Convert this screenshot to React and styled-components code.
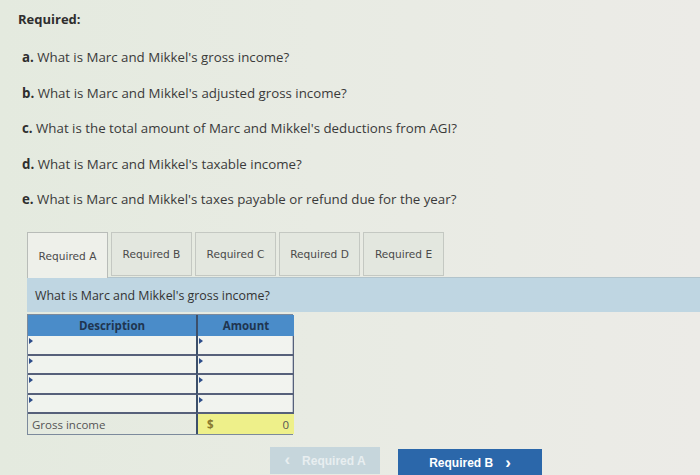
import React from "react";
import styled, { createGlobalStyle } from "styled-components";

const Global = createGlobalStyle`
  html, body { margin: 0; padding: 0; }
  body {
    width: 700px; height: 475px; overflow: hidden;
    background: linear-gradient(90deg, #e4eadf 0%, #e8ebe3 45%, #ecebe7 100%);
    font-family: "Open Sans", "Liberation Sans", sans-serif;
    color: #333;
  }
`;

const Page = styled.div`
  padding: 10px 0 0 0;
  display: flex;
  flex-direction: column;
`;

const Title = styled.div`
  font-weight: 700;
  font-size: 13px;
  padding-left: 18px;
  height: 18px;
  line-height: 18px;
  color: #2e2e2e;
`;

const Questions = styled.ol`
  list-style: none;
  margin: 21px 0 0 0;
  padding: 0 0 0 22px;
  display: flex;
  flex-direction: column;
  gap: 18.5px;
`;

const Q = styled.li`
  font-size: 13.3px;
  line-height: 17px;
  color: #3a3a3a;
  b { font-weight: 700; color: #2e2e2e; }
`;

const TabsArea = styled.div`
  margin: 24px 0 0 27px;
  display: flex;
  flex-direction: column;
`;

const TabRow = styled.div`
  display: flex;
  gap: 3px;
  height: 45px;
  position: relative;
  z-index: 1;
`;

const Tab = styled.div`
  width: 81px;
  box-sizing: border-box;
  border: 1px solid ${p => (p.$active ? "#b8bcb8" : "#c4c8c2")};
  border-bottom: ${p => (p.$active ? "none" : "1px solid #c4c8c2")};
  background: ${p => (p.$active ? "#eef0ea" : "#e3e7df")};
  height: ${p => (p.$active ? "46px" : "44px")};
  display: flex;
  align-items: center;
  justify-content: center;
  font-family: "DejaVu Sans", Verdana, sans-serif;
  font-size: 10.6px;
  color: #4a4a4a;
  white-space: nowrap;
`;

const Prompt = styled.div`
  height: 34px;
  background: #bfd6e2;
  border-top: 1px solid #b2c4cc;
  display: flex;
  align-items: center;
  padding-left: 8px;
  font-size: 12.4px;
  color: #333;
`;

const Table = styled.div`
  margin-top: 2px;
  width: 266px;
  display: grid;
  grid-template-columns: 168px 98px;
  border: 1px solid #7c8a9c;
  box-sizing: border-box;
`;

const Head = styled.div`
  background: #4a8cc9;
  height: 21px;
  display: flex;
  align-items: center;
  justify-content: center;
  font-weight: 700;
  font-size: 11.5px;
  color: #1f3550;
  border-left: ${p => (p.$right ? "2px solid #3c4f6a" : "none")};
`;

const Cell = styled.div`
  position: relative;
  height: 19.5px;
  box-sizing: border-box;
  border-bottom: 2px solid #56607a;
  border-left: ${p => (p.$right ? "2px solid #3c4f6a" : "none")};
  border-right: ${p => (p.$right ? "1px solid #56607a" : "none")};
  background: rgba(250, 250, 250, 0.55);
  &::before {
    content: "";
    position: absolute;
    left: 1px; top: 2px;
    border-left: 4px solid #2d4d8a;
    border-top: 3px solid transparent;
    border-bottom: 3px solid transparent;
  }
`;

const TotalLabel = styled.div`
  height: 20px;
  display: flex;
  align-items: center;
  padding-left: 4px;
  font-size: 11.5px;
  color: #555;
`;

const TotalAmount = styled.div`
  height: 20px;
  border-left: 2px solid #3c4f6a;
  background: #eef08a;
  display: flex;
  align-items: center;
  justify-content: space-between;
  padding: 0 5px 0 9px;
  font-size: 11.5px;
  color: #555;
  b { color: #8a7a30; font-weight: 700; }
`;

const Nav = styled.div`
  margin: 12px 0 0 243px;
  display: flex;
  gap: 18px;
  align-items: flex-end;
`;

const NavButton = styled.div`
  width: ${p => (p.$primary ? "144px" : "110px")};
  height: ${p => (p.$primary ? "28px" : "27px")};
  margin-bottom: ${p => (p.$primary ? "-3px" : "0")};
  background: ${p => (p.$primary ? "#2b67aa" : "#c6d6dc")};
  color: ${p => (p.$primary ? "#fff" : "#e8eef0")};
  display: flex;
  align-items: center;
  justify-content: center;
  gap: 12px;
  font-weight: 700;
  font-size: 12px;
  font-family: "Liberation Sans", Arial, sans-serif;
`;

const Chevron = styled.span`
  font-size: 17px;
  line-height: 1;
  margin-top: -2px;
`;

const tabs = ["Required A", "Required B", "Required C", "Required D", "Required E"];

export default function App() {
  return (
    <>
      <Global />
      <Page>
        <Title>Required:</Title>
        <Questions>
          <Q><b>a.</b> What is Marc and Mikkel's gross income?</Q>
          <Q><b>b.</b> What is Marc and Mikkel's adjusted gross income?</Q>
          <Q><b>c.</b> What is the total amount of Marc and Mikkel's deductions from AGI?</Q>
          <Q><b>d.</b> What is Marc and Mikkel's taxable income?</Q>
          <Q><b>e.</b> What is Marc and Mikkel's taxes payable or refund due for the year?</Q>
        </Questions>
        <TabsArea>
          <TabRow>
            {tabs.map((t, i) => (
              <Tab key={t} $active={i === 0}>{t}</Tab>
            ))}
          </TabRow>
          <Prompt>What is Marc and Mikkel's gross income?</Prompt>
          <Table>
            <Head>Description</Head>
            <Head $right>Amount</Head>
            {[0, 1, 2, 3].map(i => (
              <React.Fragment key={i}>
                <Cell />
                <Cell $right />
              </React.Fragment>
            ))}
            <TotalLabel>Gross income</TotalLabel>
            <TotalAmount><b>$</b><span>0</span></TotalAmount>
          </Table>
          <Nav>
            <NavButton><Chevron>&lsaquo;</Chevron><span>Required A</span></NavButton>
            <NavButton $primary><span>Required B</span><Chevron>&rsaquo;</Chevron></NavButton>
          </Nav>
        </TabsArea>
      </Page>
    </>
  );
}
